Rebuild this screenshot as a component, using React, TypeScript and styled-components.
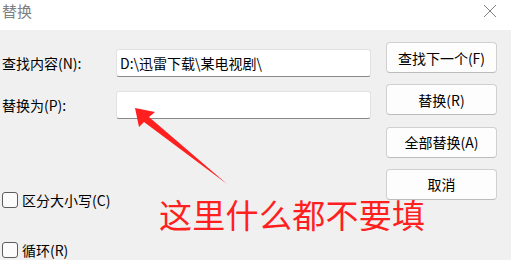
import styled, { createGlobalStyle } from "styled-components";

const GlobalStyle = createGlobalStyle`
  html, body {
    margin: 0;
    padding: 0;
    background: #f0f0f0;
  }
  body {
    font-family: "Noto Sans CJK SC", "Noto Sans", sans-serif;
    font-size: 14px;
    color: #000;
  }
`;

const Window = styled.div`
  position: relative;
  width: 511px;
  height: 260px;
  overflow: hidden;
  background: #f0f0f0;
`;

const TitleBar = styled.div`
  height: 30px;
  background: #fff;
  display: flex;
  align-items: flex-start;
  justify-content: space-between;
  padding: 0 14px 0 2px;
  box-sizing: border-box;
`;

const Title = styled.div`
  font-size: 15px;
  line-height: 22px;
  color: #808080;
`;

const CloseButton = styled.div`
  width: 14px;
  height: 14px;
  margin-top: 4px;
  display: flex;
`;

const Body = styled.div`
  display: flex;
  height: 230px;
`;

const LeftPane = styled.div`
  display: flex;
  flex-direction: column;
  padding: 19px 0 0 2px;
  width: 369px;
`;

const FieldRow = styled.div`
  display: flex;
  align-items: center;
  margin-bottom: 14px;
`;

const Label = styled.div`
  width: 114px;
  line-height: 20px;
`;

const Input = styled.div`
  width: 255px;
  height: 28px;
  box-sizing: border-box;
  background: #fff;
  border: 1px solid #e2e2e2;
  border-bottom: 1px solid #8a8a8a;
  border-radius: 3px;
  padding: 0 3px;
  display: flex;
  align-items: center;
  line-height: 20px;
  white-space: nowrap;
`;

const Options = styled.div`
  display: flex;
  flex-direction: column;
  gap: 30px;
  margin-top: 57px;
`;

const CheckRow = styled.label`
  display: flex;
  align-items: center;
  gap: 4px;
  line-height: 20px;
`;

const Box = styled.span`
  width: 16px;
  height: 16px;
  box-sizing: border-box;
  border: 1px solid #5c5c5c;
  border-radius: 3px;
  background: #fbfbfb;
`;

const ButtonColumn = styled.div`
  display: flex;
  flex-direction: column;
  gap: 11.3px;
  padding: 12px 0 0 15px;
`;

const Button = styled.div`
  width: 111px;
  height: 31px;
  box-sizing: border-box;
  background: #fdfdfd;
  border: 1px solid #d0d0d0;
  border-bottom-color: #bcbcbc;
  border-radius: 4px;
  display: flex;
  align-items: center;
  justify-content: center;
  line-height: 20px;
`;

const Note = styled.div`
  position: absolute;
  left: 159px;
  top: 196px;
  font-size: 33px;
  line-height: 36px;
  color: #ff1f1f;
  letter-spacing: 0.3px;
  white-space: nowrap;
`;

const Arrow = styled.svg`
  position: absolute;
  left: 0;
  top: 0;
  pointer-events: none;
`;

export default function App() {
  return (
    <Window>
      <GlobalStyle />
      <TitleBar>
        <Title>替换</Title>
        <CloseButton>
          <svg width="14" height="14" viewBox="0 0 14 14">
            <path d="M1 1L13 13M13 1L1 13" stroke="#808080" strokeWidth="1" />
          </svg>
        </CloseButton>
      </TitleBar>
      <Body>
        <LeftPane>
          <FieldRow>
            <Label>查找内容(N):</Label>
            <Input>D:\迅雷下载\某电视剧\</Input>
          </FieldRow>
          <FieldRow>
            <Label>替换为(P):</Label>
            <Input />
          </FieldRow>
          <Options>
            <CheckRow>
              <Box />
              区分大小写(C)
            </CheckRow>
            <CheckRow>
              <Box />
              循环(R)
            </CheckRow>
          </Options>
        </LeftPane>
        <ButtonColumn>
          <Button>查找下一个(F)</Button>
          <Button>替换(R)</Button>
          <Button>全部替换(A)</Button>
          <Button>取消</Button>
        </ButtonColumn>
      </Body>
      <Arrow width="511" height="260" viewBox="0 0 511 260">
        <polygon
          points="135,108 155,112 149,117 227,184 144,122 139,127"
          fill="#ff1f1f"
        />
      </Arrow>
      <Note>这里什么都不要填</Note>
    </Window>
  );
}
